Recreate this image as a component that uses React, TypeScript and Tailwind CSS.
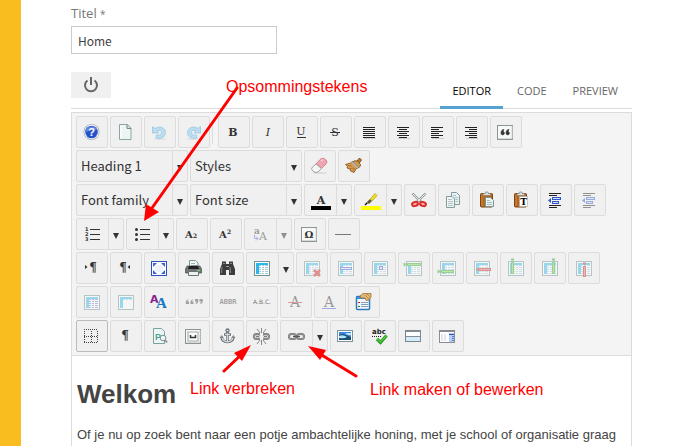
import { useState } from "react"
import type { ReactNode } from "react"

const Icon = (props: { children: ReactNode, faded?: boolean }) => {
    return (
        <svg viewBox="0 0 16 16" className={`size-4 shrink-0 overflow-visible ${props.faded ? "opacity-45" : ""}`} aria-hidden="true">
            {props.children}
        </svg>
    )
}

const Caret = (props: { faded?: boolean }) => {
    return (
        <svg viewBox="0 0 6 6" className={`size-1.5 ${props.faded ? "opacity-50" : ""}`} aria-hidden="true">
            <path d="M0 0H6L3 6Z" fill="#333" />
        </svg>
    )
}

const ToolButton = (props: { label: string, children: ReactNode, active?: boolean }) => {
    return (
        <button
            type="button"
            aria-label={props.label}
            className={`size-8 shrink-0 flex items-center justify-center rounded-xs border bg-[#f0f0f0] ${props.active ? "border-[#bbb]" : "border-[#dcdcdc]"}`}
        >
            {props.children}
        </button>
    )
}

const SplitButton = (props: { label: string, children: ReactNode, faded?: boolean }) => {
    return (
        <div className="h-8 w-12 shrink-0 flex rounded-xs border border-[#dcdcdc] bg-[#f0f0f0]">
            <button type="button" aria-label={props.label} className="flex-1 pl-[7px] flex items-center">
                {props.children}
            </button>
            <button type="button" aria-label={`${props.label} opties`} className="w-[15px] flex items-center justify-center border-l border-[#dcdcdc] pt-1">
                <Caret faded={props.faded} />
            </button>
        </div>
    )
}

const ToolSelect = (props: { label: string }) => {
    return (
        <div className="h-8 w-28 shrink-0 flex rounded-xs border border-[#dcdcdc] bg-[#f0f0f0]">
            <select
                aria-label={props.label}
                className="flex-1 min-w-0 appearance-none pl-1 text-[13px] leading-5 text-[#333] bg-transparent font-['Noto_Sans_CJK_SC',sans-serif]"
            >
                <option>{props.label}</option>
            </select>
            <span className="w-[15px] flex items-center justify-center border-l border-[#dcdcdc] pt-1 pointer-events-none">
                <Caret />
            </span>
        </div>
    )
}

const Row = (props: { children: ReactNode }) => <div className="flex gap-0.5">{props.children}</div>

const Glyph = (props: { x: number, y: number, size: number, text: string, fill?: string, weight?: string, italic?: boolean }) => {
    return (
        <text
            x={props.x}
            y={props.y}
            fontSize={props.size}
            fontWeight={props.weight ?? "bold"}
            fontStyle={props.italic ? "italic" : "normal"}
            fontFamily="DejaVu Serif, serif"
            fill={props.fill ?? "#333"}
            textAnchor="middle"
        >
            {props.text}
        </text>
    )
}

// six text lines, [x, width] for the even and odd ones
const Lines = (props: { even: [number, number], odd: [number, number] }) => {
    return (
        <Icon>
            {[3, 5, 7, 9, 11, 13].map((y, i) => {
                const [x, w] = i % 2 ? props.odd : props.even
                return <rect key={y} x={x} y={y} width={w} height="1" fill="#222" />
            })}
            <rect x="2" y="14" width="12" height="1" fill="#ccc" />
        </Icon>
    )
}

const Framed = (props: { children?: ReactNode }) => {
    return (
        <Icon>
            <rect x="-.5" y="1.5" width="15" height="14" fill="#f7f8f8" stroke="#8d9492" />
            <path d="M0 14.5H14V2" fill="none" stroke="#d5d9d7" />
            {props.children}
        </Icon>
    )
}

const Grid = (props: { tint?: string }) => {
    return (
        <g shapeRendering="crispEdges">
            <rect x="0" y="1" width="16" height="15" fill="#6f9295" />
            <rect x="1" y="2" width="14" height="13" fill="#fff" />
            <rect x="2" y="3" width="12" height="11" fill={props.tint ?? "#a9cad8"} />
            <path d="M2 3H14V5H2ZM2 5H5V14H2Z" fill="#2cb7ea" />
            <path d="M5 6.5H14M5 8.5H14M5 10.5H14M5 12.5H14M7.5 5V14M10.5 5V14" stroke="#fff" fill="none" />
        </g>
    )
}

const FadedGrid = (props: { children?: ReactNode }) => {
    return (
        <Icon faded>
            <Grid />
            {props.children}
        </Icon>
    )
}

const Undo = (props: { flip?: boolean }) => {
    return (
        <Icon>
            <g transform={props.flip ? "translate(15 0) scale(-1 1)" : undefined}>
                <ellipse cx="8" cy="15" rx="6" ry="1" fill="#dfe3e5" />
                <path d="M.5 2.500V9H7L5 7C8 5.500 10 7 9.500 9C9 11 7 11.500 4.500 11L4 14C9 15.500 13.500 13 13.500 8.500C13.500 3.500 7.500 1.500 3 4.500Z" fill="#bcdcef" stroke="#9cc8e4" strokeWidth=".8" />
            </g>
        </Icon>
    )
}

const Clipboard = (props: { children: ReactNode }) => {
    return (
        <Icon>
            <rect x=".5" y="1.500" width="12" height="13.500" rx="1" fill="#b4691f" stroke="#7d4310" />
            <path d="M2 3V14" stroke="#d08a3f" />
            <path d="M3 3.500V1.500H5L5.500 0H8L8.500 1.500H10.500V3.500Z" fill="#d9dcd9" stroke="#777" strokeWidth=".6" />
            {props.children}
        </Icon>
    )
}

const Indent = (props: { faded?: boolean }) => {
    return (
        <Icon faded={props.faded}>
            <g shapeRendering="crispEdges">
                <path d="M1 1.500H13M1 3.500H9M1 13.500H13M1 15.500H9" stroke="#222" />
                <path d="M4.500 5.500H12.500V7.500H4.500ZM4.500 9.500H10.500V11.500H4.500Z" fill="#cfdcff" stroke="#3056c8" />
            </g>
            <path d="M0 8.500L3 6V11Z" fill="#3056c8" />
        </Icon>
    )
}

const Chain = () => {
    return (
        <g fill="none">
            <g stroke="#6e6e6e" strokeWidth="2">
                <rect x="0" y="6" width="7" height="5" rx="2.500" />
                <rect x="8" y="6" width="7" height="5" rx="2.500" />
            </g>
            <g stroke="#c4c4c4" strokeWidth=".6">
                <rect x="0" y="6" width="7" height="5" rx="2.500" />
                <rect x="8" y="6" width="7" height="5" rx="2.500" />
            </g>
        </g>
    )
}

const Toolbar = () => {
    return (
        <div role="toolbar" aria-label="Opmaak" className="flex flex-col gap-0.5 px-1 py-[3px] bg-[#f4f4f4] border-b border-[#dcdcdc]">
            <Row>
                <ToolButton label="Help">
                    <Icon>
                        <circle cx="7.500" cy="8" r="8" fill="#aab0c4" />
                        <circle cx="7.500" cy="8" r="7.200" fill="#fff" />
                        <circle cx="7.500" cy="8" r="6.300" fill="#2551ca" />
                        <path d="M2 6A6 6 0 0 1 13 6Q7 5 2 8Z" fill="#6388e4" />
                        <text x="7.500" y="12" fontSize="11" fontWeight="bold" fontFamily="Liberation Sans, sans-serif" fill="#fff" textAnchor="middle">?</text>
                    </Icon>
                </ToolButton>
                <ToolButton label="Nieuw document">
                    <Icon>
                        <path d="M1.500 .5H9.500L13 4V15.500H1.500Z" fill="#edf5f4" stroke="#8ba5a5" />
                        <path d="M9 .5V4.500H13" fill="#cfdedd" stroke="#6f8988" />
                        <path d="M3 2V14" stroke="#fff" />
                    </Icon>
                </ToolButton>
                <ToolButton label="Ongedaan maken"><Undo /></ToolButton>
                <ToolButton label="Opnieuw"><Undo flip /></ToolButton>
                <span className="w-px mr-[3px] my-1 bg-[#dcdcdc]" />
                <ToolButton label="Vet"><Icon><Glyph x={7} y={12} size={11} text="B" /></Icon></ToolButton>
                <ToolButton label="Cursief"><Icon><Glyph x={8} y={12} size={11} text="I" weight="normal" italic /></Icon></ToolButton>
                <ToolButton label="Onderstrepen">
                    <Icon>
                        <Glyph x={7} y={11} size={11} text="U" weight="normal" />
                        <path d="M3 13.500H12" stroke="#333" />
                    </Icon>
                </ToolButton>
                <ToolButton label="Doorhalen">
                    <Icon>
                        <Glyph x={7} y={12} size={11} text="S" weight="normal" />
                        <path d="M2 8.500H12" stroke="#333" />
                    </Icon>
                </ToolButton>
                <ToolButton label="Uitvullen"><Lines even={[1, 12]} odd={[1, 12]} /></ToolButton>
                <ToolButton label="Centreren"><Lines even={[1, 12]} odd={[3, 8]} /></ToolButton>
                <ToolButton label="Links uitlijnen"><Lines even={[1, 12]} odd={[1, 8]} /></ToolButton>
                <ToolButton label="Rechts uitlijnen"><Lines even={[1, 12]} odd={[5, 8]} /></ToolButton>
                <ToolButton label="Citaat">
                    <Framed>
                        <path d="M6 5.500C4 5.500 3 7 3 9A1.700 1.700 0 1 0 5 7.500ZM11 5.500C9 5.500 8 7 8 9A1.700 1.700 0 1 0 10 7.500Z" fill="#333" stroke="#333" strokeWidth=".6" />
                    </Framed>
                </ToolButton>
            </Row>

            <Row>
                <ToolSelect label="Heading 1" />
                <ToolSelect label="Styles" />
                <ToolButton label="Opmaak wissen">
                    <Icon>
                        <ellipse cx="8" cy="15" rx="7" ry="1" fill="#ddd" />
                        <path d="M8 1.500Q10 -.5 12 .5L14.500 2.500Q15.500 4 14 6L9.500 10.500L4 6Z" fill="#efa5b1" stroke="#cf7886" strokeWidth=".8" />
                        <path d="M4 6L9.500 10.500L6 14Q4 15 2 14L0 12Q-1 10.500 .5 9Z" fill="#f5f5f5" stroke="#8e8e8e" strokeWidth=".8" />
                        <path d="M9 3L11 1.500" stroke="#fbd5db" strokeWidth="1.500" />
                    </Icon>
                </ToolButton>
                <ToolButton label="Code opschonen">
                    <Icon>
                        <path d="M10 4L13.500 0L15.500 2L12.500 6Z" fill="#b87a2c" stroke="#70400f" strokeWidth=".8" />
                        <path d="M6.500 4Q9 1.500 12 3.500L14.500 6.500Q15 8.500 12.500 10Z" fill="#d2984b" stroke="#704518" strokeWidth=".7" />
                        <path d="M6.500 3.500L4.500 5L-.5 6.500L1.500 8.500L1 10L4 11L4.500 13L8 14.500L10 11L12.500 9.500Z" fill="#d99d4e" stroke="#81511b" strokeWidth=".8" />
                        <path d="M6 4L12 10" stroke="#aab9c6" strokeWidth="1.600" />
                        <path d="M1.500 7.500L6 8M4 10.500L8 10M7 13L9 10" stroke="#81511b" strokeWidth=".5" />
                    </Icon>
                </ToolButton>
            </Row>

            <Row>
                <ToolSelect label="Font family" />
                <ToolSelect label="Font size" />
                <SplitButton label="Tekstkleur">
                    <Icon>
                        <Glyph x={9} y={12} size={11} text="A" />
                        <rect x="-1" y="14" width="20" height="4" fill="#000" />
                    </Icon>
                </SplitButton>
                <SplitButton label="Markeerkleur">
                    <Icon>
                        <path d="M3 13L5.500 10.500" stroke="#111" strokeWidth="1.500" />
                        <path d="M5 10L8 7L10 9L7 12Z" fill="#555" stroke="#b6a728" strokeWidth=".5" />
                        <path d="M8.500 7L13 1.500L15 3.500L10 9Z" fill="#f2e21f" stroke="#b4a113" strokeWidth=".8" />
                        <rect x="-1" y="14" width="20" height="4" fill="#ff0" />
                    </Icon>
                </SplitButton>
                <ToolButton label="Knippen">
                    <Icon>
                        <path d="M.5 1.500L9.500 10.500M13.500 1.500L4.500 10.500" stroke="#8a9396" strokeWidth="2.200" />
                        <path d="M1 2L9 10M13 2L5 10" stroke="#e8eeef" />
                        <ellipse cx="3" cy="12" rx="3" ry="2" fill="#f7aaaa" stroke="#d92a2a" strokeWidth="2" transform="rotate(-20 3 12)" />
                        <ellipse cx="11" cy="12" rx="3" ry="2" fill="#f7aaaa" stroke="#d92a2a" strokeWidth="2" transform="rotate(20 11 12)" />
                    </Icon>
                </ToolButton>
                <ToolButton label="Kopiëren">
                    <Icon>
                        <path d="M5.500 .5H10.500L13.500 3.500V12.500H5.500Z" fill="#e8f1f1" stroke="#829c9c" />
                        <path d="M.5 4.500H6L8.500 7V15.500H.5Z" fill="#f0f6f6" stroke="#829c9c" />
                        <path d="M2 7.500H6M2 9.500H7M2 11.500H7M2 13.500H7M7 3.500H10M8.500 5.500H12M9.500 7.500H12M9.500 9.500H12" stroke="#adc3c3" />
                    </Icon>
                </ToolButton>
                <ToolButton label="Plakken">
                    <Clipboard>
                        <path d="M5.500 5.500H10.500L13.500 8.500V14.500H5.500Z" fill="#edf4f4" stroke="#799493" />
                        <path d="M7 8.500H10M7 10.500H12M7 12.500H12" stroke="#a1baba" />
                    </Clipboard>
                </ToolButton>
                <ToolButton label="Plakken als tekst">
                    <Clipboard>
                        <rect x="5.500" y="4.500" width="8" height="10" fill="#fff" stroke="#aaa" strokeWidth=".6" />
                        <Glyph x={9.5} y={13} size={9} text="T" fill="#000" />
                    </Clipboard>
                </ToolButton>
                <ToolButton label="Inspringing verkleinen"><Indent /></ToolButton>
                <ToolButton label="Inspringing vergroten"><Indent faded /></ToolButton>
            </Row>

            <Row>
                <SplitButton label="Genummerde lijst">
                    <Icon>
                        <path d="M6 3.500H16M6 8.500H16M6 13.500H16" stroke="#333" />
                        <g fontSize="5" fontWeight="bold" fontFamily="DejaVu Sans, sans-serif" fill="#333">
                            <text x="1" y="5">1</text>
                            <text x="1" y="10">2</text>
                            <text x="1" y="15">3</text>
                        </g>
                    </Icon>
                </SplitButton>
                <SplitButton label="Opsommingstekens">
                    <Icon>
                        <path d="M6 3.500H16M6 8.500H16M6 13.500H16" stroke="#333" />
                        <circle cx="2.500" cy="3.500" r="1.500" fill="#333" />
                        <circle cx="2.500" cy="8.500" r="1.500" fill="#333" />
                        <circle cx="2.500" cy="13.500" r="1.500" fill="#333" />
                    </Icon>
                </SplitButton>
                <ToolButton label="Subscript">
                    <Icon>
                        <Glyph x={5} y={12} size={10} text="A" />
                        <Glyph x={11} y={12} size={6} text="2" />
                    </Icon>
                </ToolButton>
                <ToolButton label="Superscript">
                    <Icon>
                        <Glyph x={5} y={12} size={10} text="A" />
                        <Glyph x={11} y={8} size={6} text="2" />
                    </Icon>
                </ToolButton>
                <SplitButton label="Hoofdletters" faded>
                    <Icon faded>
                        <Glyph x={5} y={8} size={9} text="a" />
                        <Glyph x={11} y={14} size={11} text="A" weight="normal" />
                        <path d="M2.500 9V12.500H6M4 10.500L6 12.500L4 14.500" fill="none" stroke="#4668d5" />
                    </Icon>
                </SplitButton>
                <ToolButton label="Speciaal teken">
                    <Framed>
                        <Glyph x={7} y={12} size={10} text="Ω" />
                    </Framed>
                </ToolButton>
                <ToolButton label="Horizontale lijn">
                    <Icon><path d="M-1 8.500H15" stroke="#777" /></Icon>
                </ToolButton>
            </Row>

            <Row>
                <ToolButton label="Links naar rechts">
                    <Icon>
                        <Glyph x={9} y={12} size={12} text="¶" />
                        <path d="M1 5L3.500 7L1 9Z" fill="#333" />
                    </Icon>
                </ToolButton>
                <ToolButton label="Rechts naar links">
                    <Icon>
                        <Glyph x={5} y={12} size={12} text="¶" />
                        <path d="M12 5L9.500 7L12 9Z" fill="#333" />
                    </Icon>
                </ToolButton>
                <ToolButton label="Volledig scherm">
                    <Icon>
                        <rect x="-.5" y="1.500" width="15" height="14" fill="#fff" stroke="#2d51bc" />
                        <path d="M1 3H5L1 7ZM13 3H9L13 7ZM1 14H5L1 10ZM13 14H9L13 10Z" fill="#3b63d0" />
                        <rect x="3" y="5" width="8" height="7" rx="2" fill="#edf2ff" />
                    </Icon>
                </ToolButton>
                <ToolButton label="Afdrukken">
                    <Icon>
                        <path d="M3.500 7V.5H9.500L12 3V7Z" fill="#f5fafa" stroke="#7b9595" />
                        <path d="M5 3.500H9M5 5.500H11" stroke="#9eb3b3" />
                        <path d="M1 6H14L15.500 9V13H-.5V9Z" fill="#737575" stroke="#4b4d4d" strokeWidth=".7" />
                        <path d="M3 6H12L13 9H2Z" fill="#222" />
                        <path d="M2.500 11.500H12.500V15.500H2.500Z" fill="#eef2f2" stroke="#677" />
                        <path d="M11 10.500H14" stroke="#77d46a" />
                    </Icon>
                </ToolButton>
                <ToolButton label="Zoeken">
                    <Icon>
                        <path d="M2 1.500H6V4H9V1.500H13V4L15 9V15H9V10H6V15H0V9L2 4Z" fill="#3d3d3d" />
                        <path d="M3 3.500H5M10 3.500H12M2 7L1.500 13M10 7L10.500 13" stroke="#8b8b8b" />
                        <path d="M6 6.500H9" stroke="#999" />
                    </Icon>
                </ToolButton>
                <SplitButton label="Tabel">
                    <Icon><Grid /></Icon>
                </SplitButton>
                <ToolButton label="Tabel verwijderen">
                    <FadedGrid>
                        <path d="M10 10L16 16M16 10L10 16" stroke="#d21818" strokeWidth="2.500" />
                    </FadedGrid>
                </ToolButton>
                <ToolButton label="Rij-eigenschappen">
                    <FadedGrid><rect x="2.500" y="7.500" width="11" height="2" fill="#dce5ff" stroke="#3a56cc" /></FadedGrid>
                </ToolButton>
                <ToolButton label="Cel-eigenschappen">
                    <FadedGrid><rect x="7.500" y="6.500" width="3" height="3" fill="#dce5ff" stroke="#3a56cc" /></FadedGrid>
                </ToolButton>
                <ToolButton label="Rij erboven">
                    <FadedGrid>
                        <rect x="1.500" y="3.500" width="13" height="2" fill="#74df5d" stroke="#31a81f" />
                        <path d="M-2 3L0 4.500L-2 6ZM0 4.500H1" fill="#31a81f" stroke="#31a81f" />
                    </FadedGrid>
                </ToolButton>
                <ToolButton label="Rij eronder">
                    <FadedGrid>
                        <rect x="1.500" y="10.500" width="12" height="2" fill="#74df5d" stroke="#31a81f" />
                        <path d="M-2 10L0 11.500L-2 13ZM0 11.500H1" fill="#31a81f" stroke="#31a81f" />
                    </FadedGrid>
                </ToolButton>
                <ToolButton label="Rij verwijderen">
                    <FadedGrid>
                        <rect x="4.500" y="8.500" width="12" height="2" fill="#e6756f" stroke="#c4201d" />
                        <path d="M2 8L4 9.500L2 11Z" fill="#c4201d" />
                    </FadedGrid>
                </ToolButton>
                <ToolButton label="Kolom ervoor">
                    <FadedGrid>
                        <rect x="3.500" y="2.500" width="2" height="11" fill="#74df5d" stroke="#31a81f" />
                        <path d="M3 -1H6L4.500 1Z" fill="#31a81f" stroke="#31a81f" />
                    </FadedGrid>
                </ToolButton>
                <ToolButton label="Kolom erna">
                    <FadedGrid>
                        <rect x="10.500" y="2.500" width="2" height="11" fill="#74df5d" stroke="#31a81f" />
                        <path d="M10 -1H13L11.500 1Z" fill="#31a81f" stroke="#31a81f" />
                    </FadedGrid>
                </ToolButton>
                <ToolButton label="Kolom verwijderen">
                    <FadedGrid>
                        <rect x="7.500" y="6.500" width="2" height="10" fill="#e6756f" stroke="#c4201d" />
                        <path d="M7 3H10L8.500 5Z" fill="#c4201d" stroke="#c4201d" />
                    </FadedGrid>
                </ToolButton>
            </Row>

            <Row>
                <ToolButton label="Cellen splitsen">
                    <Icon faded>
                        <Grid tint="#6b82ce" />
                    </Icon>
                </ToolButton>
                <ToolButton label="Cellen samenvoegen">
                    <FadedGrid><path d="M5 6H14V14H5Z" fill="#fff" /></FadedGrid>
                </ToolButton>
                <ToolButton label="Stijl bewerken">
                    <Icon>
                        <g fontWeight="bold">
                            <text x="-2" y="9" fontSize="11" fill="#872391" fontFamily="DejaVu Sans, sans-serif">A</text>
                            <text x="4" y="14" fontSize="15" fill="#1678c4" fontFamily="Liberation Serif, serif">A</text>
                        </g>
                    </Icon>
                </ToolButton>
                <ToolButton label="Citeren">
                    <Icon>
                        <path d="M2.500 5C0 6 -1 8 0 10H3V7.500H1.500ZM7 5C4.500 6 4 8 4.500 10H7.500V7.500H6ZM9 5H12C13 7 12 9.500 9.500 10.500L10.500 7.500H9ZM13.500 5H16.500C17.500 7 16.500 9.500 14 10.500L15 7.500H13.500Z" fill="#a2a2a2" />
                    </Icon>
                </ToolButton>
                <ToolButton label="Afkorting">
                    <span className="text-[7px] leading-none text-[#888] font-['DejaVu_Sans_Mono',monospace]">ABBR</span>
                </ToolButton>
                <ToolButton label="Acroniem">
                    <span className="text-[6px] leading-none text-[#777] font-['DejaVu_Sans',sans-serif]">A.B.C.</span>
                </ToolButton>
                <ToolButton label="Verwijderde tekst">
                    <Icon>
                        <Glyph x={7} y={13} size={14} text="A" fill="#999" weight="normal" />
                        <path d="M0 8.500H14" stroke="#e09a9a" />
                    </Icon>
                </ToolButton>
                <ToolButton label="Ingevoegde tekst">
                    <Icon>
                        <Glyph x={7} y={13} size={14} text="A" fill="#999" weight="normal" />
                        <path d="M0 14.500H14" stroke="#9fabe2" />
                    </Icon>
                </ToolButton>
                <ToolButton label="Attributen">
                    <Icon>
                        <rect x=".5" y="2.500" width="13" height="13" rx="1" fill="#f2f8ff" stroke="#2f78bd" strokeWidth="1.500" />
                        <path d="M1 4H13" stroke="#3f91d8" strokeWidth="2" />
                        <path d="M5 8.500H12M5 10.500H12M5 12.500H12" stroke="#899eb0" />
                        <path d="M2 8.500H4" stroke="#b22" /><path d="M2 12.500H4" stroke="#281" />
                        <path d="M4 2L7 -.5H15V3L13 6L10 6.500L9 4L5 4Z" fill="#e3b877" stroke="#986322" strokeWidth=".7" />
                        <path d="M9 1L13 5M11 0L14 3" stroke="#986322" strokeWidth=".5" />
                    </Icon>
                </ToolButton>
            </Row>

            <Row>
                <ToolButton label="Hulplijnen" active>
                    <Icon>
                        <path d="M0 1.500H14M0 8.500H14M0 14.500H14M.5 3V14M7.500 3V14M13.500 3V14" fill="none" stroke="#444" strokeDasharray="1 1" />
                    </Icon>
                </ToolButton>
                <ToolButton label="Alineatekens">
                    <Icon><Glyph x={7} y={12} size={12} text="¶" /></Icon>
                </ToolButton>
                <ToolButton label="Voorbeeld">
                    <Icon>
                        <path d="M1.500 .5H9.500L12.500 3.500V15.500H1.500Z" fill="#edf6f4" stroke="#78a39e" />
                        <text x="3" y="12" fontSize="9" fontFamily="Liberation Sans, sans-serif" fontWeight="bold" fill="#4ba5a4">P</text>
                        <circle cx="11" cy="10" r="2.800" fill="#eaf8ff" stroke="#818c91" />
                        <path d="M13 12L15 14.500" stroke="#929494" strokeWidth="2" />
                    </Icon>
                </ToolButton>
                <ToolButton label="Harde spatie">
                    <Framed>
                        <rect x="2" y="4" width="10" height="9" fill="#fff" stroke="#a0a5a3" />
                        <path d="M4.500 7V9.500H9.500V7" fill="none" stroke="#333" strokeWidth="1.500" />
                    </Framed>
                </ToolButton>
                <ToolButton label="Anker">
                    <Icon>
                        <g fill="none" stroke="#6b7379" strokeWidth="2.600">
                            <circle cx="7.500" cy="2.500" r="1.500" strokeWidth="1.300" />
                            <path d="M7.500 4V14M4 6.500H11M1.500 9Q2 13.500 7.500 14Q13 13.500 13.500 9" />
                        </g>
                        <path d="M7.500 5V14M5 6.500H10M2 10Q3 13 7.500 14Q12 13 13 10" fill="none" stroke="#d3d8da" strokeWidth="1.200" />
                        <path d="M-.5 10L1.500 7L4 10ZM11 10L13.500 7L15.500 10Z" fill="#848b90" />
                    </Icon>
                </ToolButton>
                <ToolButton label="Link verbreken">
                    <Icon>
                        <Chain />
                        <path d="M6 4H9V13H6Z" fill="#f0f0f0" />
                        <path d="M5 8.500H2M10 8.500H13" stroke="#777" strokeWidth="1.500" />
                        <path d="M7.500 0V5M3 1L6 5M12 1L9 5M7.500 12V17M3 16L6 12M12 16L9 12" stroke="#888" />
                    </Icon>
                </ToolButton>
                <SplitButton label="Link maken of bewerken">
                    <Icon>
                        <g transform="translate(1 0)">
                            <Chain />
                            <path d="M4 8.500H11" stroke="#555" strokeWidth="1.500" />
                        </g>
                    </Icon>
                </SplitButton>
                <ToolButton label="Afbeelding">
                    <Icon>
                        <rect x="-.5" y="2.500" width="15" height="11" fill="#fff" stroke="#7b9298" />
                        <rect x="1" y="4" width="12" height="8" fill="#3785dc" />
                        <path d="M1 7L5 6L13 9V12H1Z" fill="#174e74" />
                        <path d="M1 8Q5 6 9 9Q6 11 1 10ZM7 5H13V7Q10 8 7 5Z" fill="#b8e6ff" />
                    </Icon>
                </ToolButton>
                <ToolButton label="Spellingcontrole">
                    <Icon>
                        <text x="0" y="6" fontSize="7" fontWeight="bold" fontFamily="DejaVu Sans, sans-serif" fill="#222">abc</text>
                        <path d="M0 8.500H10" stroke="#222" strokeDasharray="1 1" />
                        <path d="M5 11L8.500 14.500L14.500 7.500" fill="none" stroke="#239120" strokeWidth="3.200" />
                        <path d="M5 11L8.500 14L14.500 7.500" fill="none" stroke="#54ca3c" strokeWidth="1.500" />
                    </Icon>
                </ToolButton>
                <ToolButton label="Pagina-einde">
                    <Icon>
                        <rect x="-.5" y="2.500" width="15" height="11" fill="#fff" stroke="#7b8690" />
                        <path d="M0 3.500H14M0 8.500H14" stroke="#858c93" />
                        <path d="M0 9H14V13H0Z" fill="#d5edfa" />
                    </Icon>
                </ToolButton>
                <ToolButton label="Sjabloon">
                    <Icon>
                        <rect x="-.5" y="2.500" width="15" height="12" fill="#fff" stroke="#8d8d96" />
                        <path d="M-1 3H15" stroke="#888890" strokeWidth="2" />
                        <rect x="9" y="5" width="5" height="9" fill="#b8cdf5" />
                        <path d="M9 6.500H14" stroke="#2856bd" />
                        <path d="M12 8.500H14M12 10.500H14M12 12.500H14" stroke="#547bd1" />
                        <path d="M2 6V13M5 6V13" stroke="#e3e7eb" strokeWidth="2" />
                    </Icon>
                </ToolButton>
            </Row>
        </div>
    )
}

const Annotations = () => {
    return (
        <div className="absolute inset-0 pointer-events-none text-[16px] leading-5 text-[#f00] whitespace-nowrap">
            <span className="absolute left-[226px] top-[77px]">Opsommingstekens</span>
            <span className="absolute left-[190px] top-[379px]">Link verbreken</span>
            <span className="absolute left-[370px] top-[380px]">Link maken of bewerken</span>
            <svg width="696" height="446" className="absolute left-0 top-0" fill="#f00" stroke="#f00" aria-hidden="true">
                <path d="M237 88L152 208M224 371L243 353M356 376L320 354" strokeWidth="3" strokeLinecap="round" />
                <path d="M144 221L146 204L159 212ZM251 345L234 353L242 361ZM308 346L326 350L320 360Z" stroke="none" />
            </svg>
        </div>
    )
}

const App = () => {
    const [title, setTitle] = useState("Home")

    return (
        <div className="relative flex h-screen overflow-hidden bg-white font-['Liberation_Sans',Arial,sans-serif]">
            <div className="w-[21px] shrink-0 bg-[#f9bd20]" />
            <main className="flex-1 min-w-0 pl-[50px] pr-16 pt-[3px]">
                <label htmlFor="title" className="block h-5 text-[13px] leading-5 text-[#777] font-['Open_Sans',sans-serif]">
                    Titel <span className="text-[10px] leading-none">*</span>
                </label>
                <input
                    id="title"
                    value={title}
                    onChange={(e) => setTitle(e.target.value)}
                    className="block mt-[3px] h-7 w-[206px] px-1.5 border border-[#ccc] text-[12px] text-[#444] font-['Noto_Sans_CJK_SC',sans-serif]"
                />

                <div className="mt-[18px] h-[37px] flex justify-between border-b border-[#dcdcdc]">
                    <button type="button" aria-label="Editor aan of uit" className="h-[26px] w-10 flex items-center justify-center bg-[#f0f0f0]">
                        <svg viewBox="0 0 16 16" className="size-4" fill="none" stroke="#666" strokeWidth="2" aria-hidden="true">
                            <path d="M4.500 3.500A6 6 0 1 0 11.500 3.500M8 0V8" />
                        </svg>
                    </button>
                    <div role="tablist" className="flex h-[37px] pr-px text-[11px] leading-4 text-[#666] font-['Open_Sans',sans-serif]">
                        <button type="button" role="tab" aria-selected="true" className="px-3 border-b-3 border-[#55a3d3] pt-[3px] text-black">EDITOR</button>
                        <button type="button" role="tab" aria-selected="false" className="pl-3.5 pr-[13px]">CODE</button>
                        <button type="button" role="tab" aria-selected="false" className="px-[13px]">PREVIEW</button>
                    </div>
                </div>

                <div className="mt-[3px] border border-[#dcdcdc]">
                    <Toolbar />
                    <article className="pl-[5px] pr-[15px] pt-[22px] text-[#444]">
                        <h1 className="text-[26px] leading-8 font-bold">Welkom</h1>
                        <p className="mt-[17px] text-[13px] leading-4 text-justify">
                            Of je nu op zoek bent naar een potje ambachtelijke honing, met je school of organisatie graag
                            een keer een kijkje bij de bijenkast wilt nemen, of zelf bijen wilt houden en meer zoekt over
                            het vak van imker, je bent hier aan het goede adres.
                        </p>
                    </article>
                </div>
            </main>
            <Annotations />
        </div>
    )
}

export default App
